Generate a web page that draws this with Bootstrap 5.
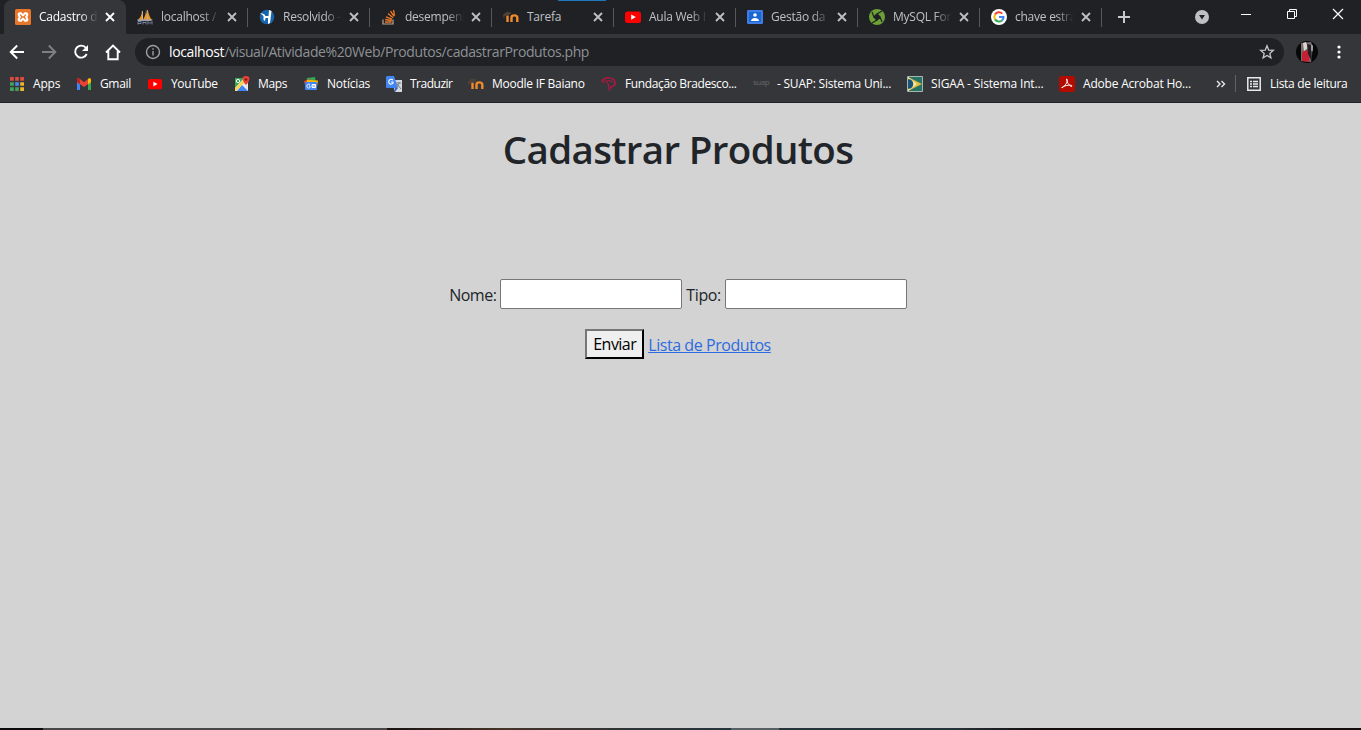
<!DOCTYPE html>
<html lang="pt-br">
<head>
<meta charset="utf-8">
<title>Cadastro de Produtos</title>
<link href="https://cdn.jsdelivr.net/npm/bootstrap@5.3.0/dist/css/bootstrap.min.css" rel="stylesheet">
<style>
body{font-family:"Open Sans","Noto Sans",sans-serif;height:730px;background:#d3d3d3;overflow:hidden}
svg{display:block;flex:none}
.chrome{font-size:12px;line-height:16px;color:#fff;background:#35363a;white-space:nowrap}
.tabstrip{height:34px;background:#202124;padding-left:4px}
.tab{width:122px;height:34px;padding-left:11px;color:#bdc1c6}
.tab .label{width:59px;letter-spacing:-.25px;margin-left:8px;-webkit-mask-image:linear-gradient(90deg,#000 70%,transparent)}
.tab .label.full{-webkit-mask-image:none}
.tab::after{content:"";position:absolute;right:0;top:8px;width:1px;height:19px;background:#55575b}
.tab.active{background:#35363a;border-radius:8px 8px 0 0;color:#fff}
.tab.active::after{display:none}
.tab .close{margin-left:7px}
.loading{top:0;left:558px;width:48px;height:1px;background:#1f78bd}
.toolbar{height:36px;padding-left:8px}
.address{width:1149px;height:28px;border-radius:14px;background:#202124;color:#8d9196;font-size:14px;margin-left:13px;padding:0 9px 0 10px}
.address b{font-weight:400;color:#fff}
.address .url{margin-left:8px;letter-spacing:-.39px}
.bookmarks{height:33px;border-bottom:1px solid #202124;padding:0 0 4px 9px}
.bm{width:var(--w);flex:none}
.bm .txt{margin-left:8px;letter-spacing:var(--s,-.2px)}
.page{height:625px;padding-right:5px}
.page h1{font-size:38.500px;font-weight:600;line-height:48px;margin:22px 0 0;letter-spacing:-.65px;color:#212529}
.fields{margin-top:106px;font-size:16px}
.fields input{width:182px;height:30px;border:1px solid #767676;border-radius:2px;background:#fff}
.fields label{letter-spacing:-.5px}
.fields label,.actions a{position:relative;top:.5px}
.fields label[for=tipo]{letter-spacing:-.4px}
.actions{margin-top:20px}
.send{width:59px;height:30px;padding:0;border:2px outset #767676;border-color:#767676 #212121 #212121 #767676;background:#efefef;color:#000;letter-spacing:-.55px}
.actions a{color:#2d6be0;letter-spacing:-.44px}
.taskbar{height:2px;background:linear-gradient(90deg,#0c0b0c 43px,#4a4749 43px 387px,#171210 387px,#453328 500px,#2b3438 650px,#27333a 731px,#566063 731px 779px,#27333a 779px 950px,#130d0e 1040px)}
</style>
</head>
<body class="d-flex flex-column">
<svg width="0" height="0" class="position-absolute">
<defs>
<symbol id="x" viewBox="0 0 10 10"><path d="M1 1l8 8M9 1L1 9" stroke="currentColor" stroke-width="1.8"/></symbol>
<symbol id="moodle" viewBox="0 0 16 16"><path d="M4.500 13V6.500M8.500 13V8.500c0-2.800 5.800-2.800 5.800 0V13" fill="none" stroke="#ef8b2c" stroke-width="2.400"/><path d="M0 6l4-3 4 1-3 2.200-4 .3v3" fill="#4b4038" stroke="#594a3d" stroke-width=".6"/></symbol>
<symbol id="yt" viewBox="0 0 16 16"><rect y="2.500" width="16" height="11.500" rx="2.500" fill="#f00"/><path d="M6.200 5.500v5.200l4.600-2.600z" fill="#fff"/></symbol>
</defs>
</svg>
<header class="chrome">
<div class="tabstrip d-flex position-relative">
<div class="tab active d-flex align-items-center position-relative"><svg width="16" height="16" viewBox="0 0 16 16"><rect width="16" height="16" rx="1.500" fill="#e9772b"/><path d="M5 3.200h1.500L8 5l1.500-1.800H11c2.800 0 2.800 3 1.300 4.800 1.500 1.800 1.500 4.800-1.300 4.800H9.500L8 11l-1.500 1.800H5C2.200 12.800 2.200 9.800 3.700 8 2.200 6.200 2.200 3.200 5 3.200z" fill="#fff"/><path d="M5.200 5.600L7 8l-1.800 2.400M10.800 5.600L9 8l1.800 2.400M6 8h4" fill="none" stroke="#e9772b" stroke-width="1.300"/></svg><span class="label">Cadastro d</span><svg class="close" width="10" height="10"><use href="#x"/></svg></div>
<div class="tab d-flex align-items-center position-relative"><svg width="16" height="16" viewBox="0 0 16 16"><path d="M1 11c2-2 4-5 4-10l1 10zM6 11c2-4 3-6 3-11l2 11zM11 11V2c1 4 2 7 4 9z" fill="#e99625"/><path d="M5.500 2v9M10.500 1v10" stroke="#d8c7a8" stroke-width=".8"/><path d="M0 10.500h16l-2 1.500H1z" fill="#9ca3b8"/><path d="M1 15.500v-3h3v2H1m5 1v-3m0 1h3m0-1v3m2 0v-3l2 2 2-2v3" fill="none" stroke="#777fa0"/></svg><span class="label">localhost /</span><svg class="close" width="10" height="10"><use href="#x"/></svg></div>
<div class="tab d-flex align-items-center position-relative"><svg width="16" height="16" viewBox="0 0 16 16"><circle cx="8" cy="8" r="7.300" fill="#1764ad"/><path d="M1 4l4 1 1.500 2h3L10 1l2.500 1L11 14l-2 1V9H6.500L6 12 4.500 11V7z" fill="#fff"/></svg><span class="label">Resolvido -</span><svg class="close" width="10" height="10"><use href="#x"/></svg></div>
<div class="tab d-flex align-items-center position-relative"><svg width="16" height="16" viewBox="0 0 16 16"><path d="M2 10.500V15h10v-4.500" fill="none" stroke="#b9a596" stroke-width="1.200"/><path d="M4 13h6.500M4.200 10.500l6.500 1M5 7.800l6 2.300M7 4.600l5 4.100M9.500 2.200l3.600 5.200M12.500 1l1 5.500" stroke="#ed7825" stroke-width="1.350"/></svg><span class="label">desempenh</span><svg class="close" width="10" height="10"><use href="#x"/></svg></div>
<div class="tab d-flex align-items-center position-relative"><svg width="16" height="16"><use href="#moodle"/></svg><span class="label full">Tarefa</span><svg class="close" width="10" height="10"><use href="#x"/></svg></div>
<div class="tab d-flex align-items-center position-relative"><svg width="16" height="16"><use href="#yt"/></svg><span class="label">Aula Web I</span><svg class="close" width="10" height="10"><use href="#x"/></svg></div>
<div class="tab d-flex align-items-center position-relative"><svg width="16" height="16" viewBox="0 0 16 16"><rect y="1" width="16" height="14" rx="1.200" fill="#3e7de5"/><rect x="2" y="3" width="12" height="10" fill="#1967d2"/><circle cx="8" cy="6" r="1.800" fill="#fff"/><path d="M4 12c0-4 8-4 8 0z" fill="#fff"/></svg><span class="label">Gestão da</span><svg class="close" width="10" height="10"><use href="#x"/></svg></div>
<div class="tab d-flex align-items-center position-relative"><svg width="16" height="16" viewBox="0 0 16 16"><circle cx="8" cy="8" r="8" fill="#6da036"/><path d="M8 4.800L11.200 8 8 11.200 4.800 8zM8 5l5-3M11 8l2 5M8 11l-5 3M5 8L3 3" fill="#202124" stroke="#202124" stroke-width="1.200"/></svg><span class="label">MySQL For</span><svg class="close" width="10" height="10"><use href="#x"/></svg></div>
<div class="tab d-flex align-items-center position-relative"><svg width="16" height="16" viewBox="0 0 16 16"><circle cx="8" cy="8" r="8" fill="#fff"/><g fill="none" stroke-width="2"><path d="M4 5.600a4.700 4.700 0 0 1 7.300-1" stroke="#ea4335"/><path d="M4 5.600a4.700 4.700 0 0 0 0 4.800" stroke="#fbbc05"/><path d="M4 10.400a4.700 4.700 0 0 0 7 1" stroke="#34a853"/><path d="M11 11.400c1.300-1.200 1.600-2.500 1.500-3.400H8" stroke="#4285f4"/></g></svg><span class="label">chave estra</span><svg class="close" width="10" height="10"><use href="#x"/></svg></div>
<svg class="mt-1" style="margin-left:16px" width="12" height="26" viewBox="0 0 12 26"><path d="M6 7v12M0 13h12" stroke="#c7cacd" stroke-width="2"/></svg>
<svg class="ms-auto" width="161" height="34" viewBox="1200 0 161 34"><path d="M1241 14.500h10" stroke="#fff"/><path d="M1287.500 11.500h7v7h-7zM1289.500 11.500v-2h7v7h-2" fill="none" stroke="#fff"/><path d="M1333 9l10 10m0-10l-10 10" stroke="#fff" stroke-width="1.200"/></svg>
<svg class="position-absolute" style="left:1195px;top:10px" width="14" height="14"><circle cx="7" cy="7" r="7" fill="#bdc1c6"/><path d="M4 5h6l-3 4.500z" fill="#202124"/></svg>
<span class="loading position-absolute"></span>
</div>
<div class="toolbar d-flex align-items-center">
<svg width="114" height="28" viewBox="8 38 114 28" fill="none" stroke="#fff" stroke-width="1.900"><path d="M24 52H11M17.200 45.500L10.700 52l6.500 6.500"/><path d="M42 52h13M48.800 45.500l6.500 6.500-6.500 6.500" stroke="#7d7f83"/><path d="M86 48a6 6 0 1 0 .7 6"/><path d="M88 45v6h-6z" fill="#fff" stroke="none"/><path d="M106 52.500l7-7 7 7M108.300 51v8.300h9.400V51"/></svg>
<div class="address d-flex align-items-center"><svg width="16" height="16" fill="none" stroke="#9aa0a6" stroke-width="1.400"><circle cx="8" cy="8" r="6.500"/><path d="M8 7v4.500M8 4.200v1.600"/></svg><span class="url"><b>localhost</b>/visual/Atividade%20Web/Produtos/cadastrarProdutos.php</span><svg class="ms-auto" width="16" height="16" fill="none" stroke="#c4c7ca" stroke-width="1.300"><path d="M8 1.800l1.700 4.300 4.600.3-3.500 3 1.100 4.500L8 11.500l-3.900 2.400 1.100-4.500-3.500-3 4.600-.3z"/></svg></div>
<svg style="margin-left:12px" width="22" height="22" viewBox="0 0 22 22"><circle cx="11" cy="11" r="11" fill="#080808"/><path d="M5 2l10-1 2 5-2 15-10-1z" fill="#777071"/><path d="M7 2l3-1 2 6-4 3z" fill="#dfd4d1"/><path d="M6 11l5-2 3 4-1 8-7-1z" fill="#c62132"/><path d="M11 3l4 1 1 17-4-8z" fill="#211f25"/><path d="M16 4v6" stroke="#d7d9db"/></svg>
<svg style="margin-left:18px" width="6" height="16" fill="#fff"><circle cx="3" cy="3" r="1.600"/><circle cx="3" cy="8" r="1.600"/><circle cx="3" cy="13" r="1.600"/></svg>
</div>
<nav class="bookmarks d-flex align-items-center">
<div class="bm d-flex align-items-center" style="--w:67px"><svg width="16" height="16"><path d="M1 3h4M1 8h4M1 13h4M6 3h4M6 8h4M6 13h4M11 3h4M11 8h4M11 13h4" stroke-width="4" stroke="#e9b52d"/><path d="M1 3h14" stroke="#dc4b3f" stroke-width="4"/><path d="M1 8h4M1 13h4M6 13h4" stroke="#43a25c" stroke-width="4"/><path d="M6 8h4" stroke="#4b8af4" stroke-width="4"/><path d="M5.500 0v16M10.500 0v16M0 5.500h16M0 10.500h16" stroke="#35363a" stroke-width="1.400"/></svg><span class="txt">Apps</span></div>
<div class="bm d-flex align-items-center" style="--w:71px;--s:-.35px"><svg width="16" height="16"><path d="M1 3v11h3V7z" fill="#4285f4"/><path d="M12 7v7h3V3z" fill="#34a853"/><path d="M1 4c0-2 2-2 3-1l4 3.300L12 3c1-1 3-1 3 1v2l-7 5-7-5z" fill="#ea4335"/><path d="M12 3c1-1 3-1 3 1v2l-3 2.500z" fill="#fbbc04"/><path d="M1 4v2l3 2.500V3C3 2 1 2 1 4z" fill="#c5221f"/></svg><span class="txt">Gmail</span></div>
<div class="bm d-flex align-items-center" style="--w:87px;--s:-.4px"><svg width="16" height="16" viewBox="-1 -1 18 18"><use href="#yt" width="16" height="16"/></svg><span class="txt">YouTube</span></div>
<div class="bm d-flex align-items-center" style="--w:69px;--s:-.35px"><svg width="16" height="16"><path d="M1 2h13v13H1z" fill="#e8eaed"/><path d="M1 2h9L1 12z" fill="#34a853"/><path d="M3 15l5-6 6 6z" fill="#4285f4"/><path d="M1 12l8-8 2 2-9 9H1z" fill="#fbd34c"/><path d="M12 0c-5 0-4 5 0 9 4-4 5-9 0-9z" fill="#ea4335"/><circle cx="12" cy="3.500" r="1.300" fill="#8c1711"/><circle cx="4" cy="5" r="1.700" fill="none" stroke="#fff"/></svg><span class="txt">Maps</span></div>
<div class="bm d-flex align-items-center" style="--w:83px"><svg width="16" height="16"><path d="M4 2l8-1 1 7H3z" fill="#34a853"/><path d="M1 5l6-2 4 6H2z" fill="#ea4335"/><path d="M4 4l11 .5-1 6H3z" fill="#fbbc04"/><rect x="2" y="6" width="12" height="8" rx="1" fill="#4285f4"/><path d="M7 8.500C4.500 7 3 10 4.500 11.500s3 0 2.500-1.500H6M9 8.500h3.500V11.500H9zM9 10h3" fill="none" stroke="#fff"/></svg><span class="txt">Notícias</span></div>
<div class="bm d-flex align-items-center" style="--w:82px;--s:-.5px"><svg width="16" height="16"><path d="M6 4h10v12H9z" fill="#d5d8dd"/><path d="M1 0h7l4 12H1a1 1 0 0 1-1-1V1z" fill="#4285f4"/><path d="M9 12h3l-3 4z" fill="#3367d6"/><path d="M7 4C4 2 2 5 3 7s5 1 4-1H5" fill="none" stroke="#fff" stroke-width="1.100"/><path d="M10 7h5M13 6v1c0 2-2 4-3 5M11 8l4 5" fill="none" stroke="#777d85"/></svg><span class="txt">Traduzir</span></div>
<div class="bm d-flex align-items-center" style="--w:133px;--s:-.26px"><svg width="16" height="16"><use href="#moodle"/></svg><span class="txt">Moodle IF Baiano</span></div>
<div class="bm d-flex align-items-center" style="--w:152px;--s:-.38px"><svg width="16" height="16" fill="none" stroke="#b51643"><path d="M1 6c2-6 12-5 13 0 1 4-3 5-5 5" stroke-width="1.500"/><path d="M2 7c3-3.500 8-3 10-.5M6 6c2 2 2 5 2 9M10 11v2" stroke-width="1.100"/></svg><span class="txt">Fundação Bradesco...</span></div>
<div class="bm d-flex align-items-center" style="--w:154px;--s:-.23px"><span style="width:16px;font-size:8px;line-height:12px;margin-top:-5px;color:#64666a;letter-spacing:-.5px">suap</span><span class="txt">- SUAP: Sistema Uni...</span></div>
<div class="bm d-flex align-items-center" style="--w:152px;--s:-.14px"><svg width="16" height="16"><path d="M.5.500h15v15H.5z" fill="#277267" stroke="#a9b8ad"/><path d="M1 1l14 7-14 7z" fill="#e2bd45"/><path d="M1 1l9 7-9 7z" fill="#f6e8a3"/><path d="M1 3c7 0 7 10 0 10z" fill="#1a5279"/></svg><span class="txt">SIGAA - Sistema Int...</span></div>
<div class="bm d-flex align-items-center" style="--w:156px"><svg width="16" height="16"><rect width="16" height="16" rx="2.500" fill="#b30b00"/><path d="M7.500 3c2 0 .3 6-4.500 9-1-2 10-4 10-2s-5-2-5.500-7z" fill="none" stroke="#fff"/></svg><span class="txt">Adobe Acrobat Ho...</span></div>
<svg width="32" height="20" fill="none" stroke="#e8eaed" stroke-width="1.400"><path d="M2 7l3 3-3 3M6.500 7l3 3-3 3"/><path d="M20.500 1v17" stroke="#606267" stroke-width="1"/></svg>
<div class="d-flex align-items-center"><svg width="14" height="14" fill="none" stroke="#e8eaed"><path d="M.8.8h12.400v12.400H.8z" stroke-width="1.500"/><path d="M3 4.500h2M6 4.500h5M3 7h2M6 7h5M3 9.500h2M6 9.500h5" stroke-width="1.300"/></svg><span style="margin-left:9px;letter-spacing:-.3px">Lista de leitura</span></div>
</nav>
</header>
<main class="page text-center">
<h1>Cadastrar Produtos</h1>
<form class="fields">
<div class="d-flex justify-content-center align-items-center gap-1"><label for="nome">Nome:</label><input id="nome" type="text"><label for="tipo">Tipo:</label><input id="tipo" type="text"></div>
<div class="actions d-flex justify-content-center align-items-center gap-1"><button class="send" type="button">Enviar</button><a href="#">Lista de Produtos</a></div>
</form>
</main>
<footer class="taskbar"></footer>
<script src="https://cdn.jsdelivr.net/npm/bootstrap@5.3.0/dist/js/bootstrap.bundle.min.js"></script>
</body>
</html>
